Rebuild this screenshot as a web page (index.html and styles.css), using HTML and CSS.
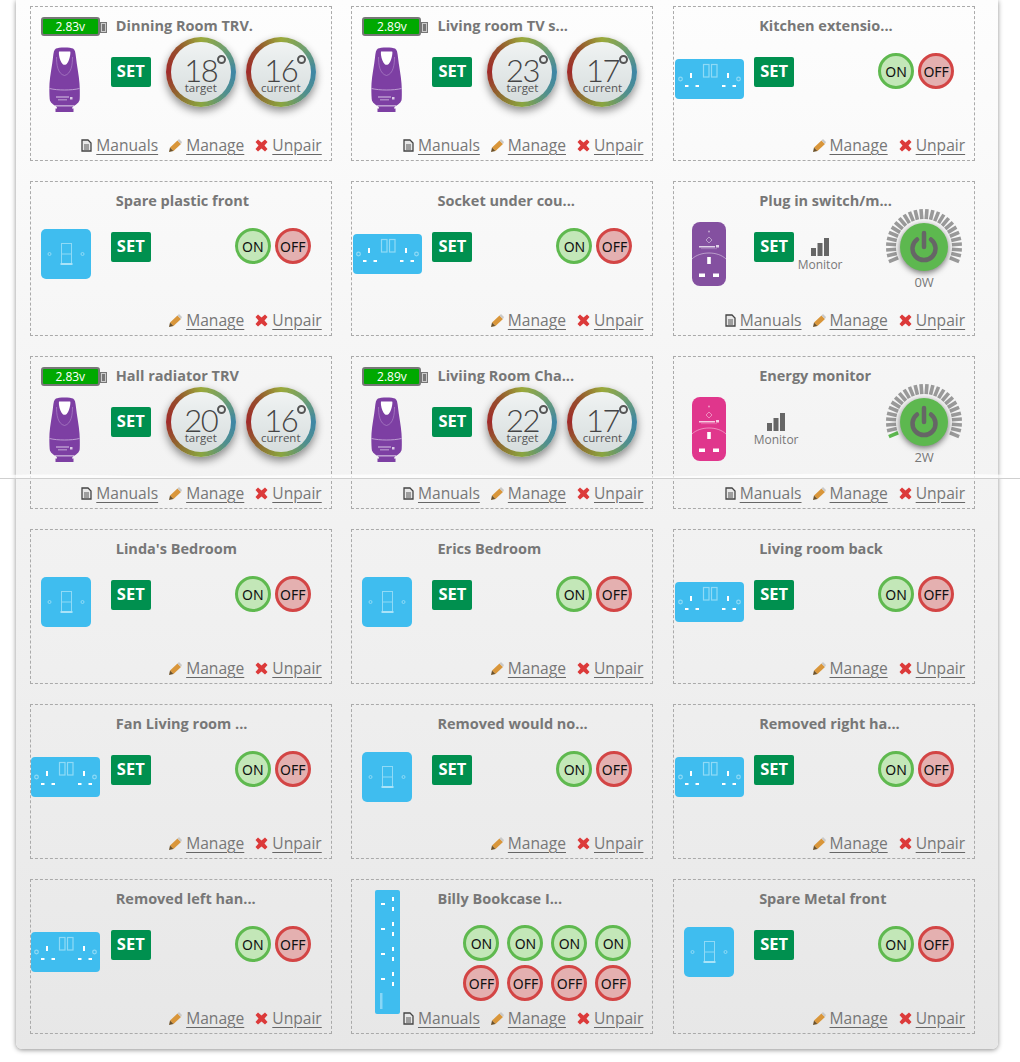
FILE: index.html
```html
<!DOCTYPE html>
<html lang="en">
<head>
<meta charset="utf-8">
<title>Devices</title>
<link rel="stylesheet" href="styles.css">
</head>
<body>
<svg class="sprite" xmlns="http://www.w3.org/2000/svg">
  <symbol id="trv" viewBox="0 0 31 65">
    <path fill="#7d3fa3" d="M7 1.500C9 0 22 0 24 1.500c2 1 2.500 4 3 9 .8 8 3 18 3.500 26 .3 5 .5 11 .2 15.500-.3 4-4 5.500-7 8v.5h-16v-.5c-3-2.500-6.700-4-7-8C.4 47.500.2 41.500.5 36.500 1 28.500 3.200 18.500 4 10.500c.5-5 1-8 3-9z"/>
    <path fill="#7d3fa3" d="M8 59h15v2.500h1.500V65H6.500v-3.500H8z"/>
    <path fill="#fff" d="M10 4.500h11c.5 0 .5 1.500.2 3.500-.5 3.500-2.200 8.500-4.200 9.500-1 .3-2.500.3-3.200-.3-2-1.700-3.300-5.700-3.800-9.200-.2-2 0-3.500 0-3.500z"/>
    <path fill="none" stroke="#b48fcb" stroke-width=".6" d="M7.500 10c0 7 1 17 8 18.500 7-1.500 8-11.500 8-18.500"/>
    <path fill="none" stroke="#cdb4dd" stroke-width=".8" d="M.5 41.500c8 2 22 2 30 0"/>
    <path fill="#d9c8e5" d="M7 49.500h13v1H7zM9 52.500h9v.8H9zM21 50h2.500v2.500H21z"/>
    <path fill="#fff" d="M6 58.500h19v.8H6z"/>
  </symbol>
  <symbol id="switch" viewBox="0 0 50 50">
    <rect width="50" height="50" rx="5" fill="#3fbdef"/>
    <g fill="none" stroke="#8fdaf6" stroke-width="1">
      <rect x="20.500" y="14.500" width="10" height="20"/>
      <path d="M20.500 25h10"/>
      <circle cx="8.500" cy="25" r="1.500"/>
      <circle cx="41.500" cy="25" r="1.500"/>
    </g>
    <path fill="#a9e3f8" d="M19.500 34h12v2h-12z"/>
  </symbol>
  <symbol id="socket" viewBox="0 0 69 40">
    <rect width="69" height="40" rx="4" fill="#3fbdef"/>
    <g fill="none" stroke="#8fdaf6" stroke-width="1.200">
      <rect x="28.500" y="5.500" width="5.500" height="12.500"/>
      <rect x="36.500" y="5.500" width="5.500" height="12.500"/>
      <circle cx="5.500" cy="20" r="1.800"/>
      <circle cx="63.500" cy="20" r="1.800"/>
    </g>
    <path fill="#fff" d="M15 14h2v5h-2zM10 26h3.500v2H10zM20.500 26h3.500v2h-3.500zM52 14h2v5h-2zM47 26h3.500v2H47zM57.500 26h3.500v2h-3.500z"/>
  </symbol>
  <symbol id="strip" viewBox="0 0 25 124">
    <rect width="25" height="124" rx="2" fill="#3fbdef"/>
    <path fill="#fff" d="M6 13h4v2H6zM17 7h2v4h-2zM17 17h2v4h-2zM6 38h4v2H6zM17 32h2v4h-2zM17 42h2v4h-2zM6 63h4v2H6zM17 57h2v4h-2zM17 67h2v4h-2zM6 88h4v2H6zM17 82h2v4h-2zM17 92h2v4h-2z"/>
    <path fill="#b9e8fa" fill-opacity=".6" d="M5 103h2.500v16H5z"/>
  </symbol>
  <symbol id="plug" viewBox="0 0 34 64">
    <rect width="34" height="64" rx="8" fill="currentColor"/>
    <g fill="none" stroke="#fff" stroke-opacity=".55">
      <path stroke-width=".8" d="M0 37c8-8 26-8 34 0"/>
      <path stroke-width=".8" d="M17 15l3 3-3 3-3-3z"/>
    </g>
    <circle cx="17" cy="9.500" r="1" fill="#fff" fill-opacity=".5"/>
    <path fill="#fff" fill-opacity=".75" d="M7 24h16v1.500H7zM24 23h3v2.500h-3z"/>
    <path fill="#fff" fill-opacity=".4" d="M9 26.500h16v.6H9z"/>
    <path fill="#fff" d="M15.200 35h3.600v7h-3.600zM7 51.500h6v3.500H7zM21 51.500h6v3.500h-6z"/>
  </symbol>
  <symbol id="bars" viewBox="0 0 18 18">
    <path fill="#666" d="M0 10h5v8H0zM6.500 5h5v13h-5zM13 0h5v18h-5z"/>
  </symbol>
  <symbol id="doc" viewBox="0 0 11 13">
    <path fill="#e8e8e8" stroke="#444" stroke-width="1.300" d="M1 1h6l3 3v8H1z"/>
    <path stroke="#555" d="M3 6h5M3 8h5M3 10h5"/>
  </symbol>
  <symbol id="pencil" viewBox="0 0 13 13">
    <path fill="#d9963a" d="M8.500 1.500l3.500 3.500-7.500 7-3.500-3.500z"/>
    <path fill="#6d5128" d="M1 8.500l3.500 3.500L0 13z"/>
    <path fill="#c9c9c9" d="M8.500 1.500L10 0l3 3-1 2z"/>
  </symbol>
  <symbol id="cross" viewBox="0 0 13 13">
    <path fill="#dc3a3a" d="M3 .5l3.500 3L10 .5 12.500 3 9.500 6.500l3 3.500L10 12.500l-3.500-3-3.500 3L.5 10l3-3.500L.5 3z"/>
  </symbol>
  <symbol id="ticks" viewBox="0 0 80 80">
    <g fill="#999">
      <rect x="38.200" y="2" width="3.600" height="10" transform="rotate(-103.500 40 40)"/>
      <rect x="38.200" y="2" width="3.600" height="10" transform="rotate(-94.500 40 40)"/>
      <rect x="38.200" y="2" width="3.600" height="10" transform="rotate(-85.500 40 40)"/>
      <rect x="38.200" y="2" width="3.600" height="10" transform="rotate(-76.500 40 40)"/>
      <rect x="38.200" y="2" width="3.600" height="10" transform="rotate(-67.500 40 40)"/>
      <rect x="38.200" y="2" width="3.600" height="10" transform="rotate(-58.500 40 40)"/>
      <rect x="38.200" y="2" width="3.600" height="10" transform="rotate(-49.500 40 40)"/>
      <rect x="38.200" y="2" width="3.600" height="10" transform="rotate(-40.500 40 40)"/>
      <rect x="38.200" y="2" width="3.600" height="10" transform="rotate(-31.500 40 40)"/>
      <rect x="38.200" y="2" width="3.600" height="10" transform="rotate(-22.500 40 40)"/>
      <rect x="38.200" y="2" width="3.600" height="10" transform="rotate(-13.500 40 40)"/>
      <rect x="38.200" y="2" width="3.600" height="10" transform="rotate(-4.500 40 40)"/>
      <rect x="38.200" y="2" width="3.600" height="10" transform="rotate(4.500 40 40)"/>
      <rect x="38.200" y="2" width="3.600" height="10" transform="rotate(13.500 40 40)"/>
      <rect x="38.200" y="2" width="3.600" height="10" transform="rotate(22.500 40 40)"/>
      <rect x="38.200" y="2" width="3.600" height="10" transform="rotate(31.500 40 40)"/>
      <rect x="38.200" y="2" width="3.600" height="10" transform="rotate(40.500 40 40)"/>
      <rect x="38.200" y="2" width="3.600" height="10" transform="rotate(49.500 40 40)"/>
      <rect x="38.200" y="2" width="3.600" height="10" transform="rotate(58.500 40 40)"/>
      <rect x="38.200" y="2" width="3.600" height="10" transform="rotate(67.500 40 40)"/>
      <rect x="38.200" y="2" width="3.600" height="10" transform="rotate(76.500 40 40)"/>
      <rect x="38.200" y="2" width="3.600" height="10" transform="rotate(85.500 40 40)"/>
      <rect x="38.200" y="2" width="3.600" height="10" transform="rotate(94.500 40 40)"/>
      <rect x="38.200" y="2" width="3.600" height="10" transform="rotate(103.500 40 40)"/>
      <rect x="38.200" y="2" width="3.600" height="10" transform="rotate(112.500 40 40)"/>
    </g>
  </symbol>
  <symbol id="tick-first" viewBox="0 0 80 80">
    <rect fill="#999" x="38.200" y="2" width="3.600" height="10" transform="rotate(-112.500 40 40)"/>
  </symbol>
  <symbol id="power-core" viewBox="0 0 80 80">
    <circle class="power-disc" cx="40" cy="40" r="24" fill="#5db84f"/>
    <path fill="none" stroke="#666" stroke-width="4.500" stroke-linecap="round" d="M33 32.500a11.500 11.500 0 1 0 14 0M40 26v14"/>
  </symbol>
</svg>

<main class="panel">
  <section class="grid">

    <article class="card">
      <header class="title"><span class="batt"><span class="batt-cell">2.83v</span></span><span>Dinning Room TRV.</span></header>
      <div class="device"><svg class="d-trv"><use href="#trv"/></svg></div>
      <div class="body"><span class="set">SET</span>
        <div class="dial dial-first"><div class="dial-num">18<i class="deg"></i></div><div class="dial-lab">target</div></div>
        <div class="dial"><div class="dial-num">16<i class="deg"></i></div><div class="dial-lab">current</div></div>
      </div>
      <footer class="links"><svg class="ic ic-doc"><use href="#doc"/></svg><a class="lnk">Manuals</a><svg class="ic ic-pen"><use href="#pencil"/></svg><a class="lnk">Manage</a><svg class="ic ic-x"><use href="#cross"/></svg><a class="lnk">Unpair</a></footer>
    </article>

    <article class="card">
      <header class="title"><span class="batt"><span class="batt-cell">2.89v</span></span><span>Living room TV s...</span></header>
      <div class="device"><svg class="d-trv"><use href="#trv"/></svg></div>
      <div class="body"><span class="set">SET</span>
        <div class="dial dial-first"><div class="dial-num">23<i class="deg"></i></div><div class="dial-lab">target</div></div>
        <div class="dial"><div class="dial-num">17<i class="deg"></i></div><div class="dial-lab">current</div></div>
      </div>
      <footer class="links"><svg class="ic ic-doc"><use href="#doc"/></svg><a class="lnk">Manuals</a><svg class="ic ic-pen"><use href="#pencil"/></svg><a class="lnk">Manage</a><svg class="ic ic-x"><use href="#cross"/></svg><a class="lnk">Unpair</a></footer>
    </article>

    <article class="card">
      <header class="title title-plain">Kitchen extensio...</header>
      <div class="device"><svg class="d-socket"><use href="#socket"/></svg></div>
      <div class="body"><span class="set">SET</span><div class="onoff"><span class="on">ON</span><span class="off">OFF</span></div></div>
      <footer class="links"><svg class="ic ic-pen"><use href="#pencil"/></svg><a class="lnk">Manage</a><svg class="ic ic-x"><use href="#cross"/></svg><a class="lnk">Unpair</a></footer>
    </article>

    <article class="card">
      <header class="title title-plain">Spare plastic front</header>
      <div class="device"><svg class="d-switch"><use href="#switch"/></svg></div>
      <div class="body"><span class="set">SET</span><div class="onoff"><span class="on">ON</span><span class="off">OFF</span></div></div>
      <footer class="links"><svg class="ic ic-pen"><use href="#pencil"/></svg><a class="lnk">Manage</a><svg class="ic ic-x"><use href="#cross"/></svg><a class="lnk">Unpair</a></footer>
    </article>

    <article class="card">
      <header class="title title-plain">Socket under cou...</header>
      <div class="device"><svg class="d-socket"><use href="#socket"/></svg></div>
      <div class="body"><span class="set">SET</span><div class="onoff"><span class="on">ON</span><span class="off">OFF</span></div></div>
      <footer class="links"><svg class="ic ic-pen"><use href="#pencil"/></svg><a class="lnk">Manage</a><svg class="ic ic-x"><use href="#cross"/></svg><a class="lnk">Unpair</a></footer>
    </article>

    <article class="card">
      <header class="title title-plain">Plug in switch/m...</header>
      <div class="device"><svg class="d-plug d-purple"><use href="#plug"/></svg></div>
      <div class="body"><span class="set">SET</span>
        <div class="monitor monitor-after-set"><svg class="bars"><use href="#bars"/></svg><span class="monitor-text">Monitor</span></div>
        <div class="power"><svg class="power-svg"><use href="#ticks"/><use href="#tick-first"/><use href="#power-core"/></svg><span class="watts">0W</span></div>
      </div>
      <footer class="links"><svg class="ic ic-doc"><use href="#doc"/></svg><a class="lnk">Manuals</a><svg class="ic ic-pen"><use href="#pencil"/></svg><a class="lnk">Manage</a><svg class="ic ic-x"><use href="#cross"/></svg><a class="lnk">Unpair</a></footer>
    </article>

    <article class="card card-torn">
      <header class="title"><span class="batt"><span class="batt-cell">2.83v</span></span><span>Hall radiator TRV</span></header>
      <div class="device"><svg class="d-trv"><use href="#trv"/></svg></div>
      <div class="body"><span class="set">SET</span>
        <div class="dial dial-first"><div class="dial-num">20<i class="deg"></i></div><div class="dial-lab">target</div></div>
        <div class="dial"><div class="dial-num">16<i class="deg"></i></div><div class="dial-lab">current</div></div>
      </div>
      <footer class="links"><svg class="ic ic-doc"><use href="#doc"/></svg><a class="lnk">Manuals</a><svg class="ic ic-pen"><use href="#pencil"/></svg><a class="lnk">Manage</a><svg class="ic ic-x"><use href="#cross"/></svg><a class="lnk">Unpair</a></footer>
    </article>

    <article class="card card-torn">
      <header class="title"><span class="batt"><span class="batt-cell">2.89v</span></span><span>Liviing Room Cha...</span></header>
      <div class="device"><svg class="d-trv"><use href="#trv"/></svg></div>
      <div class="body"><span class="set">SET</span>
        <div class="dial dial-first"><div class="dial-num">22<i class="deg"></i></div><div class="dial-lab">target</div></div>
        <div class="dial"><div class="dial-num">17<i class="deg"></i></div><div class="dial-lab">current</div></div>
      </div>
      <footer class="links"><svg class="ic ic-doc"><use href="#doc"/></svg><a class="lnk">Manuals</a><svg class="ic ic-pen"><use href="#pencil"/></svg><a class="lnk">Manage</a><svg class="ic ic-x"><use href="#cross"/></svg><a class="lnk">Unpair</a></footer>
    </article>

    <article class="card card-torn">
      <header class="title title-plain">Energy monitor</header>
      <div class="device"><svg class="d-plug d-pink"><use href="#plug"/></svg></div>
      <div class="body">
        <div class="monitor monitor-alone"><svg class="bars"><use href="#bars"/></svg><span class="monitor-text">Monitor</span></div>
        <div class="power"><svg class="power-svg"><use href="#ticks"/><rect class="tick-on" x="38.200" y="2" width="3.600" height="10" transform="rotate(-112.500 40 40)"/><use href="#power-core"/></svg><span class="watts">2W</span></div>
      </div>
      <footer class="links"><svg class="ic ic-doc"><use href="#doc"/></svg><a class="lnk">Manuals</a><svg class="ic ic-pen"><use href="#pencil"/></svg><a class="lnk">Manage</a><svg class="ic ic-x"><use href="#cross"/></svg><a class="lnk">Unpair</a></footer>
    </article>

    <article class="card">
      <header class="title title-plain">Linda's Bedroom</header>
      <div class="device"><svg class="d-switch"><use href="#switch"/></svg></div>
      <div class="body"><span class="set">SET</span><div class="onoff"><span class="on">ON</span><span class="off">OFF</span></div></div>
      <footer class="links"><svg class="ic ic-pen"><use href="#pencil"/></svg><a class="lnk">Manage</a><svg class="ic ic-x"><use href="#cross"/></svg><a class="lnk">Unpair</a></footer>
    </article>

    <article class="card">
      <header class="title title-plain">Erics Bedroom</header>
      <div class="device"><svg class="d-switch"><use href="#switch"/></svg></div>
      <div class="body"><span class="set">SET</span><div class="onoff"><span class="on">ON</span><span class="off">OFF</span></div></div>
      <footer class="links"><svg class="ic ic-pen"><use href="#pencil"/></svg><a class="lnk">Manage</a><svg class="ic ic-x"><use href="#cross"/></svg><a class="lnk">Unpair</a></footer>
    </article>

    <article class="card">
      <header class="title title-plain">Living room back</header>
      <div class="device"><svg class="d-socket"><use href="#socket"/></svg></div>
      <div class="body"><span class="set">SET</span><div class="onoff"><span class="on">ON</span><span class="off">OFF</span></div></div>
      <footer class="links"><svg class="ic ic-pen"><use href="#pencil"/></svg><a class="lnk">Manage</a><svg class="ic ic-x"><use href="#cross"/></svg><a class="lnk">Unpair</a></footer>
    </article>

    <article class="card">
      <header class="title title-plain">Fan Living room ...</header>
      <div class="device"><svg class="d-socket"><use href="#socket"/></svg></div>
      <div class="body"><span class="set">SET</span><div class="onoff"><span class="on">ON</span><span class="off">OFF</span></div></div>
      <footer class="links"><svg class="ic ic-pen"><use href="#pencil"/></svg><a class="lnk">Manage</a><svg class="ic ic-x"><use href="#cross"/></svg><a class="lnk">Unpair</a></footer>
    </article>

    <article class="card">
      <header class="title title-plain">Removed would no...</header>
      <div class="device"><svg class="d-switch"><use href="#switch"/></svg></div>
      <div class="body"><span class="set">SET</span><div class="onoff"><span class="on">ON</span><span class="off">OFF</span></div></div>
      <footer class="links"><svg class="ic ic-pen"><use href="#pencil"/></svg><a class="lnk">Manage</a><svg class="ic ic-x"><use href="#cross"/></svg><a class="lnk">Unpair</a></footer>
    </article>

    <article class="card">
      <header class="title title-plain">Removed right ha...</header>
      <div class="device"><svg class="d-socket"><use href="#socket"/></svg></div>
      <div class="body"><span class="set">SET</span><div class="onoff"><span class="on">ON</span><span class="off">OFF</span></div></div>
      <footer class="links"><svg class="ic ic-pen"><use href="#pencil"/></svg><a class="lnk">Manage</a><svg class="ic ic-x"><use href="#cross"/></svg><a class="lnk">Unpair</a></footer>
    </article>

    <article class="card">
      <header class="title title-plain">Removed left han...</header>
      <div class="device"><svg class="d-socket"><use href="#socket"/></svg></div>
      <div class="body"><span class="set">SET</span><div class="onoff"><span class="on">ON</span><span class="off">OFF</span></div></div>
      <footer class="links"><svg class="ic ic-pen"><use href="#pencil"/></svg><a class="lnk">Manage</a><svg class="ic ic-x"><use href="#cross"/></svg><a class="lnk">Unpair</a></footer>
    </article>

    <article class="card">
      <header class="title title-plain">Billy Bookcase I...</header>
      <div class="device"><svg class="d-strip"><use href="#strip"/></svg></div>
      <div class="body">
        <div class="multi">
          <span class="on">ON</span><span class="on">ON</span><span class="on">ON</span><span class="on">ON</span>
          <span class="off">OFF</span><span class="off">OFF</span><span class="off">OFF</span><span class="off">OFF</span>
        </div>
      </div>
      <footer class="links"><svg class="ic ic-doc"><use href="#doc"/></svg><a class="lnk">Manuals</a><svg class="ic ic-pen"><use href="#pencil"/></svg><a class="lnk">Manage</a><svg class="ic ic-x"><use href="#cross"/></svg><a class="lnk">Unpair</a></footer>
    </article>

    <article class="card">
      <header class="title title-plain">Spare Metal front</header>
      <div class="device"><svg class="d-switch"><use href="#switch"/></svg></div>
      <div class="body"><span class="set">SET</span><div class="onoff"><span class="on">ON</span><span class="off">OFF</span></div></div>
      <footer class="links"><svg class="ic ic-pen"><use href="#pencil"/></svg><a class="lnk">Manage</a><svg class="ic ic-x"><use href="#cross"/></svg><a class="lnk">Unpair</a></footer>
    </article>

  </section>
</main>

<svg class="tear" viewBox="0 0 1020 6" preserveAspectRatio="none" xmlns="http://www.w3.org/2000/svg">
  <path fill="#fff" fill-opacity=".7" d="M0 5V2c60-2 130 2 220 1s170-3 260-1 170 2 260 0 190-2 280 0v3z"/>
  <path fill="#cfcfcf" d="M0 5h1020v1H0z"/>
</svg>
</body>
</html>
```

FILE: styles.css
```css
* { box-sizing: border-box; }

html, body {
  margin: 0;
  padding: 0;
  background: #fff;
}

body {
  font-family: "Open Sans", "Noto Sans", sans-serif;
  color: #777;
  position: relative;
  height: 1062px;
  overflow: hidden;
}

.sprite { display: none; }

.panel {
  width: 982px;
  height: 1049px;
  margin-left: 16px;
  padding: 6px 0 0 13.750px;
  background: linear-gradient(#fdfdfd, #e7e7e7);
  border-radius: 0 0 6px 6px;
  box-shadow: 0 1px 5px rgba(0, 0, 0, .45);
}

.grid {
  display: grid;
  grid-template-columns: 302px 302px 302px;
  column-gap: 19.700px;
  row-gap: 20px;
}

.card {
  height: 155px;
  border: 1px dashed #aaa;
  display: grid;
  grid-template-columns: 70px 230px;
  grid-template-rows: 30px 1fr auto;
}

.card-torn { height: 153px; }

.title {
  grid-column: 1 / 3;
  grid-row: 1;
  display: flex;
  height: 30px;
  padding: 8px 0 0 10px;
  line-height: 22px;
  font-size: 14.500px;
  font-weight: 700;
  color: #777;
  white-space: nowrap;
}

.title-plain { padding-left: 85px; }

.batt {
  position: relative;
  width: 59px;
  height: 19px;
  margin-top: 2px;
  margin-right: 16px;
  border: 2px solid #777;
  border-radius: 3px;
  background: #00a900;
  display: flex;
  align-items: center;
  justify-content: center;
}

.batt::after {
  content: "";
  position: absolute;
  left: 57px;
  top: 3px;
  width: 5px;
  height: 9px;
  background: #777;
  border: 1px solid #777;
  box-shadow: inset 0 0 0 1px #ccc;
}

.batt-cell {
  color: #fff;
  font-size: 12px;
  font-weight: 400;
  line-height: 15px;
}

.device {
  grid-column: 1;
  grid-row: 1 / 4;
  height: 144px;
  display: flex;
  align-items: center;
  justify-content: center;
}

.d-trv { width: 31px; height: 65px; margin-right: 2px; }
.d-switch { width: 50px; height: 50px; }
.d-socket { width: 69px; height: 40px; }
.d-strip { width: 25px; height: 124px; }
.d-plug { width: 34px; height: 64px; }
.d-purple { color: #8450a0; }
.d-pink { color: #e0368c; }

.body {
  grid-column: 2;
  grid-row: 2;
  height: 70px;
  display: flex;
  align-items: center;
  padding-left: 10px;
}

.set {
  flex: none;
  width: 40px;
  height: 30px;
  border-radius: 2px;
  background: #00904f;
  color: #fff;
  font-size: 16.500px;
  font-weight: 700;
  line-height: 28px;
  text-align: center;
}

.dial {
  flex: none;
  position: relative;
  width: 70px;
  height: 70px;
  margin-left: 10px;
  border-radius: 50%;
  background: conic-gradient(#9aa93a 0deg, #6f9f6f 45deg, #3f86a5 90deg, #4f8f8f 130deg, #8aa53f 180deg, #8f6a30 225deg, #a02a2a 270deg, #96502c 315deg, #9aa93a 360deg);
  box-shadow: 0 4px 9px rgba(0, 0, 0, .45);
  display: flex;
  flex-direction: column;
  align-items: center;
  padding-top: 21px;
}

.dial::before {
  content: "";
  position: absolute;
  inset: 5px;
  border-radius: 50%;
  background: linear-gradient(#f0f3f3, #d6dddd);
}

.dial-first { margin-left: 15px; }

.dial-num {
  position: relative;
  font-family: Lato, "Open Sans", sans-serif;
  font-weight: 300;
  font-size: 31px;
  letter-spacing: -1.500px;
  line-height: 24px;
  color: #444;
}

.deg {
  position: absolute;
  left: 100%;
  top: -3px;
  width: 9px;
  height: 9px;
  border: 2px solid #555;
  border-radius: 50%;
}

.dial-lab {
  position: relative;
  margin-top: -1px;
  font-size: 11.500px;
  line-height: 14px;
  color: #555;
}

.onoff {
  display: flex;
  gap: 4px;
  margin-left: 84px;
  margin-top: -2px;
}

.on, .off {
  width: 36px;
  height: 36px;
  border-radius: 50%;
  border-width: 3px;
  border-style: solid;
  color: #111;
  font-size: 14px;
  line-height: 32px;
  text-align: center;
  font-family: "Noto Sans", sans-serif;
}

.on { background: #c3e7b8; border-color: #5fb94f; }
.off { background: #e4b0b0; border-color: #d34545; }

.multi {
  display: grid;
  grid-template-columns: repeat(4, 36px);
  column-gap: 8px;
  row-gap: 4px;
  margin-left: 31px;
  align-self: flex-start;
  margin-top: 15px;
}

.monitor {
  flex: none;
  width: 44px;
  display: flex;
  flex-direction: column;
  align-items: center;
  font-size: 12px;
  line-height: 14px;
  color: #777;
  align-self: flex-start;
  margin-top: 26px;
}

.monitor-text { margin-top: 2px; }
.monitor-after-set { margin-left: 4px; }
.monitor-alone { margin-left: 0; }

.bars { width: 18px; height: 18px; }

.power {
  flex: none;
  margin-left: auto;
  margin-right: 10px;
  margin-top: -5px;
  align-self: flex-start;
  width: 80px;
  display: flex;
  flex-direction: column;
  align-items: center;
}

.power-svg { width: 80px; height: 80px; display: block; }
.power-disc { filter: drop-shadow(0 2px 3px rgba(0, 0, 0, .55)); }
.tick-on { fill: #5db84f; }

.watts {
  margin-top: -12px;
  font-size: 13px;
  line-height: 14px;
  color: #777;
}

.links {
  grid-column: 1 / 3;
  grid-row: 3;
  display: flex;
  justify-content: flex-end;
  align-items: center;
  padding: 0 9px 5px 0;
  height: 25px;
}

.lnk {
  font-size: 15.600px;
  line-height: 20px;
  color: #777;
  text-decoration: underline;
  text-decoration-color: #666;
  text-underline-offset: 3px;
}

.ic { flex: none; margin-left: 11px; margin-right: 4px; }
.ic-doc { width: 11px; height: 13px; }
.ic-pen { width: 13px; height: 13px; }
.ic-x { width: 13px; height: 13px; }

.tear {
  position: absolute;
  left: 0;
  top: 473px;
  width: 1020px;
  height: 6px;
}
```
